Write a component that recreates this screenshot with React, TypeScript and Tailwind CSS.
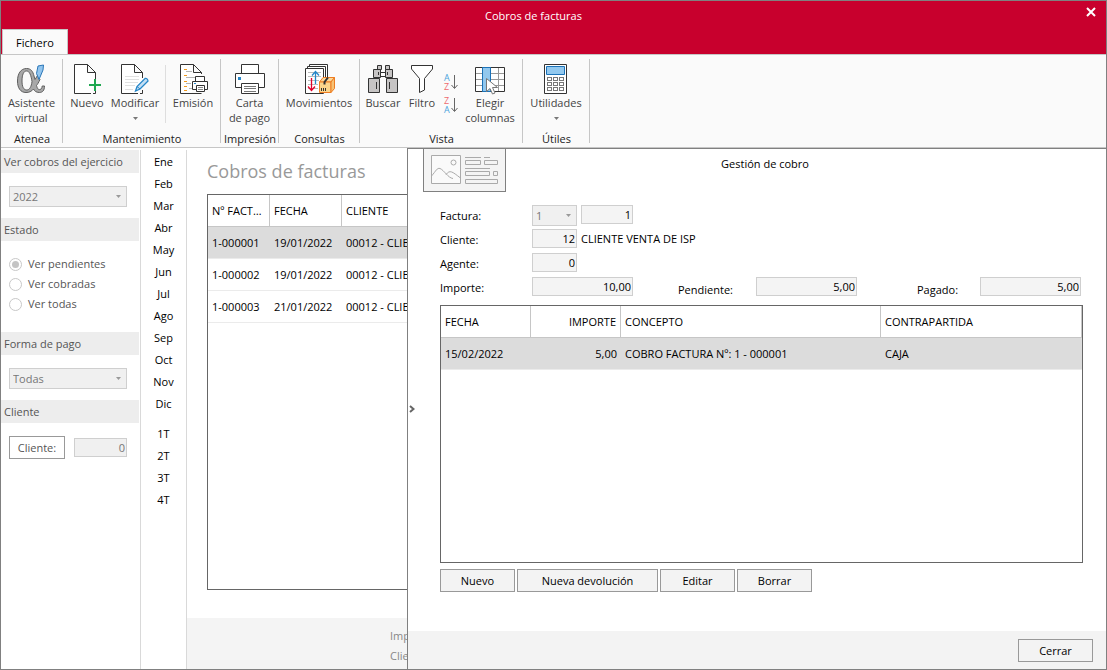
import type { ReactNode } from "react";

const MONTHS = ["Ene", "Feb", "Mar", "Abr", "May", "Jun", "Jul", "Ago", "Sep", "Oct", "Nov", "Dic"];
const QUARTERS = ["1T", "2T", "3T", "4T"];

const INVOICES = [
  { id: "1-000001", date: "19/01/2022", client: "00012 - CLIENTE" },
  { id: "1-000002", date: "19/01/2022", client: "00012 - CLIENTE" },
  { id: "1-000003", date: "21/01/2022", client: "00012 - CLIENTE" },
];

/* ---------- icons ---------- */

function Icon({ children }: { children: ReactNode }) {
  return (
    <svg width="32" height="31" viewBox="0 0 32 31" fill="none" stroke="#333" className="shrink-0" aria-hidden>
      {children}
    </svg>
  );
}

function AlphaIcon() {
  return (
    <Icon>
      <path
        d="M10.500 4.500C15 4.500 17 7.500 18 12L19 15.500L21.500 11.500L24 15.500C22.500 18.500 21.500 20.500 20.500 21.500C21.500 25 22.500 26 24 25.500C25.500 25 26 24 26.200 22H28.500C28.500 26.500 26.500 28.500 23.500 28.500C20 28.500 18.500 27 17.500 25C15.500 27.500 13 28.500 10 28.500C4.500 28.500 1.500 24 1.500 17C1.500 9.500 5 4.500 10.500 4.500Z"
        fill="#a8a8a8"
        stroke="#5f5f5f"
      />
      <path
        d="M10.500 7C13.500 7 15 11 16 17.500C15.500 22.500 13.500 26 10.800 26C7.500 26 6 22.500 6 17C6 11 7.500 7 10.500 7Z"
        fill="#fafafa"
        stroke="#5f5f5f"
      />
      <path d="M22 2L27.500 1L27 6L23 15.500L20.500 9.500Z" fill="#92c5ee" stroke="#2b77b8" />
    </Icon>
  );
}

function NewDocIcon() {
  return (
    <Icon>
      <path d="M20 29.500H3.500V.5H16.500L24.500 8.500V15M24.500 27V29.500H22M16.500 .5V8.500H24.500" fill="#fff" />
      <path d="M24 15V27M18 21H30" stroke="#1fa750" strokeWidth="2" />
    </Icon>
  );
}

function EditDocIcon() {
  return (
    <Icon>
      <path d="M19 29.500H2.500V.5H15.500L23.500 8.500V14M23.500 26V29.500H21M15.500 .5V8.500H23.500" fill="#fff" />
      <path d="M6 12.500H20M6 15.500H20M6 18.500H19M6 21.500H16M6 25.500H14" stroke="#e0e0e0" />
      <path d="M16.500 27L18 22.500L26 14.500Q28.500 14 29 17L21 25Z" fill="#c5dff4" stroke="#2586c8" strokeWidth="1.300" />
      <path d="M18 22.500L21 25" stroke="#2586c8" />
    </Icon>
  );
}

function IssueIcon() {
  return (
    <Icon>
      <path d="M14 29.500H3.500V.5H16.500L24.500 8.500V10M16.500 .5V8.500H24.500M14 29.500H24.500" fill="#fff" />
      <path d="M7 5.500H10M7 11.500H10M7 17.500H10M7 22.500H10M7 26.500H10" stroke="#f39a1e" />
      <path d="M9 7.500H15M9 13.500H18M9 19.500H14M12 24.500H15" stroke="#b5b5b5" />
      <path d="M18.500 17V12.500H27.500V17M15.500 17.500H30.500V25.500H28M19 25.500H15.500V17.500" fill="#fff" />
      <path d="M19.500 21.500H27.500V27.500H19.500Z" fill="#fff" />
      <path d="M21 23.500H26M21 25.500H26" stroke="#888" />
      <path d="M17 19.500H19" stroke="#2586c8" />
    </Icon>
  );
}

function PrinterIcon() {
  return (
    <Icon>
      <path d="M7.500 9.500V.5H24.500V9.500" fill="#fff" />
      <path d="M1.500 9.500H30.500V23.500H1.500Z" fill="#fff" />
      <path d="M7.500 19.500H24.500V29.500H7.500Z" fill="#fff" />
      <path d="M10 22.500H22M10 24.500H22M10 27.500H22" stroke="#777" />
      <path d="M4 13H7V16H4Z" fill="#2586c8" stroke="none" />
    </Icon>
  );
}

function MovesIcon() {
  return (
    <Icon>
      <path d="M6.500 .5H24.500V26H6.500Z" fill="#fff" />
      <path d="M4.500 2.500H22.500V28H4.500Z" fill="#fff" />
      <path d="M2.500 4.500H20.500V29.500H2.500Z" fill="#fff" />
      <path d="M5 8.500H18M5 12.500H18M5 16.500H16M5 20.500H15M5 24.500H15" stroke="#bbb" />
      <path d="M8.500 14V26M5 22.500L8.500 26.500L12 22.500" stroke="#e4002b" strokeWidth="1.300" />
      <path d="M12.500 20V8M9 11.500L12.500 7.500L16 11.500" stroke="#2586c8" strokeWidth="1.300" />
      <path d="M16.500 18L20 13.500H31.500L28 18Z" fill="#fbd89a" stroke="#ed7d22" />
      <path d="M16.500 18H28V28.500H16.500Z" fill="#fbd58c" stroke="#ed7d22" />
      <path d="M28 18L31.500 13.500V24.500L28 28.500Z" fill="#f7c274" stroke="#ed7d22" />
      <path d="M21.500 20.500V18L25 13.500" strokeWidth="2" />
      <path d="M18.500 24V27M20.500 24V27M22.500 24V27" strokeWidth="1" />
    </Icon>
  );
}

function BinocularsIcon() {
  return (
    <Icon>
      <g fill="#c6c4c4">
        <path d="M10.500 1.500H14.500V5.500H10.500ZM18.500 1.500H22.500V5.500H18.500Z" />
        <path d="M13.500 8.500H18.500V12.500H13.500Z" fill="#fff" />
        <path d="M6.500 5.500H13.500V13.500H6.500ZM18.500 5.500H25.500V13.500H18.500Z" />
        <path d="M1.500 14.500H12.500V28.500H1.500ZM19.500 14.500H30.500V28.500H19.500Z" />
      </g>
      <path d="M9.500 18V25M22.500 18V25M11.500 8V11M20.500 8V11" />
    </Icon>
  );
}

function FunnelIcon() {
  return (
    <Icon>
      <path d="M5.500 1.500H26.500V5L18.500 14.500V26L13.500 28.500V14.500L5.500 5Z" fill="#fff" />
    </Icon>
  );
}

function SortIcon({ reverse }: { reverse?: boolean }) {
  return (
    <svg width="18" height="18" viewBox="0 0 18 18" fill="none" className="overflow-visible" aria-hidden>
      <text x="2" y="8" fontSize="9" fill={reverse ? "#ee6a6e" : "#4aa3dc"}>
        {reverse ? "Z" : "A"}
      </text>
      <text x="2" y="17" fontSize="9" fill={reverse ? "#4aa3dc" : "#ee6a6e"}>
        {reverse ? "A" : "Z"}
      </text>
      <path d="M12.500 2V15M9.500 12L12.500 15.500L15.500 12" stroke="#666" />
    </svg>
  );
}

function ColumnsIcon() {
  return (
    <Icon>
      <path d="M1.500 3.500H30.500V27.500H1.500Z" fill="#fff" stroke="none" />
      <path d="M1 9.500H31M1 15.500H31M1 21.500H31M24.500 3V28" stroke="#999" />
      <path d="M1.500 3.500H30.500V27.500H1.500Z" />
      <path d="M8.500 3.500H16.500V27.500H8.500Z" fill="#92c8ee" stroke="#1b72b8" />
      <path d="M12.500 14.500V27.500L16 24.500L18.500 30L21 29L18.500 23.500L23.500 23.500Z" fill="#fff" stroke="#777" />
    </Icon>
  );
}

function CalculatorIcon() {
  return (
    <Icon>
      <path d="M4.500 .5H26.500V29.500H4.500Z" fill="#fff" />
      <path d="M6.500 2.500H24.500V10.500H6.500Z" fill="#92c8ee" stroke="#1b72b8" />
      <g stroke="#777">
        {[13.5, 18.5, 23.5].map((y) =>
          [7.5, 13.5, 19.5].map((x) => <rect key={`${x}-${y}`} x={x} y={y} width="4" height="3" />)
        )}
      </g>
    </Icon>
  );
}

function CardIcon() {
  return (
    <svg width="67" height="30" viewBox="0 0 67 30" fill="none" stroke="#aaa" aria-hidden>
      <path d="M.5 .5H29.500V28.500H.5Z" fill="#fafafa" />
      <circle cx="22.500" cy="7.500" r="2.500" />
      <path d="M.5 21C5 16 6 12.500 9 13.500C13 15 17 23 22 23.500M15 19.500C19 14.500 21 16.500 29.500 23" />
      <path d="M34 2.500H50M53 2.500H59M34 13.500H59" />
      <path d="M34.500 5.500H49.500V9.500H34.500ZM53.500 5.500H66.500V9.500H53.500ZM34.500 16.500H58.500V20.500H34.500ZM62.500 16.500H66.500V20.500H62.500ZM34.500 24.500H66.500V28.500H34.500Z" />
    </svg>
  );
}

function Caret({ className = "" }: { className?: string }) {
  return (
    <svg width="5" height="3" viewBox="0 0 5 3" fill="currentColor" className={className} aria-hidden>
      <path d="M0 0H5L2.500 3Z" />
    </svg>
  );
}

/* ---------- ribbon ---------- */

function RibbonGroup({ label, className = "pr-px", children }: { label: string; className?: string; children: ReactNode }) {
  return (
    <section className="relative flex flex-col after:absolute after:top-1 after:right-0 after:bottom-1 after:w-px after:bg-[#c6c6c6]">
      <div className={`flex h-[76px] ${className}`}>{children}</div>
      <h2 className="h-4 pb-px text-center leading-[15px] text-[#222]">{label}</h2>
    </section>
  );
}

function RibbonButton({
  icon,
  lines,
  menu,
  className,
}: {
  icon: ReactNode;
  lines: string[];
  menu?: boolean;
  className: string;
}) {
  return (
    <button type="button" className={`flex flex-col items-center pt-[9px] leading-[15px] text-[#444] ${className}`}>
      {icon}
      {lines.map((line) => (
        <span key={line} className="whitespace-nowrap">
          {line}
        </span>
      ))}
      {menu && <Caret className="mt-[7px] text-[#777]" />}
    </button>
  );
}

function Ribbon() {
  return (
    <div className="flex border-y border-[#c6c6c6] bg-[#fafafa]">
      <RibbonGroup label="Atenea">
        <RibbonButton icon={<AlphaIcon />} lines={["Asistente", "virtual"]} className="w-[61px]" />
      </RibbonGroup>
      <RibbonGroup label="Mantenimiento" className="px-px">
        <RibbonButton icon={<NewDocIcon />} lines={["Nuevo"]} className="w-[46px]" />
        <RibbonButton icon={<EditDocIcon />} lines={["Modificar"]} menu className="w-[50px]" />
        <span className="mt-[10px] mb-2 ml-[5px] w-px bg-[#dedede]" />
        <RibbonButton icon={<IssueIcon />} lines={["Emisión"]} className="w-[54px]" />
      </RibbonGroup>
      <RibbonGroup label="Impresión">
        <RibbonButton icon={<PrinterIcon />} lines={["Carta", "de pago"]} className="w-[57px]" />
      </RibbonGroup>
      <RibbonGroup label="Consultas">
        <RibbonButton icon={<MovesIcon />} lines={["Movimientos"]} className="w-[80px]" />
      </RibbonGroup>
      <RibbonGroup label="Vista" className="pr-[7px]">
        <RibbonButton icon={<BinocularsIcon />} lines={["Buscar"]} className="w-[46px]" />
        <RibbonButton icon={<FunnelIcon />} lines={["Filtro"]} className="w-[32px]" />
        <div className="flex w-[26px] flex-col items-center gap-[5px] pt-[18px]">
          <button type="button" aria-label="Orden ascendente">
            <SortIcon />
          </button>
          <button type="button" aria-label="Orden descendente">
            <SortIcon reverse />
          </button>
        </div>
        <RibbonButton icon={<ColumnsIcon />} lines={["Elegir", "columnas"]} className="w-[52px]" />
      </RibbonGroup>
      <RibbonGroup label="Útiles">
        <RibbonButton icon={<CalculatorIcon />} lines={["Utilidades"]} menu className="w-[66px]" />
      </RibbonGroup>
    </div>
  );
}

/* ---------- filters ---------- */

function SelectBox({ id, label, value, className }: { id: string; label: string; value: string; className: string }) {
  return (
    <div className={`relative h-[21px] ${className}`}>
      <select
        id={id}
        aria-label={label}
        disabled
        className="h-full w-full appearance-none border border-[#cfcfcf] bg-[#f0f0f0] px-[3px] leading-[19px] text-[#777] opacity-100"
      >
        <option>{value}</option>
      </select>
      <Caret className="pointer-events-none absolute top-[9px] right-[6px] text-[#999]" />
    </div>
  );
}

function FilterTitle({ children }: { children: ReactNode }) {
  return <h2 className="mr-px h-[23px] bg-[#ededed] pl-[3px] leading-[23px]">{children}</h2>;
}

function Filters() {
  return (
    <aside className="w-[139px] shrink-0 pt-[2px] text-[#555]">
      <FilterTitle>Ver cobros del ejercicio</FilterTitle>
      <div className="px-2 pt-[13px] pb-[11px]">
        <SelectBox id="year" label="Ejercicio" value="2022" className="w-[118px]" />
      </div>
      <FilterTitle>Estado</FilterTitle>
      <div className="px-2 pt-[13px] pb-[18px]">
        {["Ver pendientes", "Ver cobradas", "Ver todas"].map((label, i) => (
          <label key={label} className="flex h-5 items-center gap-[6px]">
            <input
              type="radio"
              name="status"
              defaultChecked={i === 0}
              className="h-[13px] w-[13px] appearance-none rounded-full border border-[#c8c8c8] bg-white bg-clip-content p-[2px] checked:bg-[#c4c4c4]"
            />
            {label}
          </label>
        ))}
      </div>
      <FilterTitle>Forma de pago</FilterTitle>
      <div className="px-2 pt-[13px] pb-[11px]">
        <SelectBox id="payment" label="Forma de pago" value="Todas" className="w-[118px]" />
      </div>
      <FilterTitle>Cliente</FilterTitle>
      <div className="flex items-center gap-[9px] px-2 pt-[13px]">
        <button type="button" className="h-[23px] w-[56px] border border-[#999] bg-white pt-px">
          Cliente:
        </button>
        <input
          aria-label="Cliente"
          defaultValue="0"
          className="h-[19px] w-[53px] border border-[#cfcfcf] bg-[#f0f0f0] px-px text-right text-[#777]"
        />
      </div>
    </aside>
  );
}

function Periods() {
  return (
    <nav className="mt-[2px] flex w-[47px] shrink-0 flex-col border-x border-[#d9d9d9] pt-px text-black">
      {MONTHS.map((m) => (
        <button key={m} type="button" className="h-[22px]">
          {m}
        </button>
      ))}
      <div className="mt-2 flex flex-col">
        {QUARTERS.map((q) => (
          <button key={q} type="button" className="h-[22px]">
            {q}
          </button>
        ))}
      </div>
    </nav>
  );
}

function InvoiceList() {
  return (
    <main className="flex w-[220px] shrink-0 flex-col overflow-hidden">
      <h1 className="pt-[11px] pb-[11px] pl-5 text-[18px] leading-6 text-[#999]">Cobros de facturas</h1>
      <div className="mb-7 ml-5 flex-1 border border-r-0 border-[#666]">
        <table className="w-full table-fixed border-separate border-spacing-0 text-left text-black">
          <colgroup>
            <col className="w-[62px]" />
            <col className="w-[72px]" />
            <col />
          </colgroup>
          <thead>
            <tr className="h-8 *:border-b *:border-[#c6c6c6] *:px-1 *:pt-[2px] *:font-normal">
              <th className="truncate border-r">Nº FACTURA</th>
              <th className="border-r">FECHA</th>
              <th>CLIENTE</th>
            </tr>
          </thead>
          <tbody>
            {INVOICES.map((row, i) => (
              <tr
                key={row.id}
                className={`h-8 *:border-b *:border-[#ebebeb] *:pt-[2px] *:pl-1 ${i === 0 ? "bg-[#dcdcdc]" : ""}`}
              >
                <td>{row.id}</td>
                <td>{row.date}</td>
                <td className="overflow-hidden whitespace-nowrap">{row.client}</td>
              </tr>
            ))}
          </tbody>
        </table>
      </div>
      <footer className="h-[51px] bg-[#f4f4f4] pt-2 pl-[203px] leading-5 text-[#888]">
        <p className="overflow-hidden">Importe</p>
        <p className="overflow-hidden">Cliente</p>
      </footer>
    </main>
  );
}

/* ---------- payment panel ---------- */

function ValueInput({ id, label, value, className }: { id: string; label?: string; value: string; className: string }) {
  return (
    <input
      id={id}
      aria-label={label}
      defaultValue={value}
      className={`h-[19px] border border-[#cfcfcf] bg-[#f4f4f4] px-px text-right text-black ${className}`}
    />
  );
}

function PanelButton({ className = "w-[75px]", children }: { className?: string; children: ReactNode }) {
  return (
    <button type="button" className={`h-[23px] border border-[#999] bg-[#f3f3f3] pt-px text-black ${className}`}>
      {children}
    </button>
  );
}

function PaymentPanel() {
  return (
    <section className="flex min-w-0 flex-1 flex-col border-t border-l border-[#808080] bg-white text-black">
      <header className="grid grid-cols-[98px_1fr_82px]">
        <div className="ml-[15px] flex h-[43px] items-center justify-center border border-t-0 border-[#808080] bg-[#f4f4f4]">
          <CardIcon />
        </div>
        <h2 className="pt-[7px] text-center leading-4">Gestión de cobro</h2>
      </header>

      <div className="flex flex-1">
        <button type="button" aria-label="Contraer" className="flex w-8 items-center pb-[5px] pl-px">
          <svg width="6" height="8" viewBox="0 0 6 8" fill="none" stroke="#666" strokeWidth="2" aria-hidden>
            <path d="M1 1L4.500 4L1 7" />
          </svg>
        </button>
        <div className="flex min-w-0 flex-1 flex-col pt-[13px] pr-[23px] pb-[39px]">
          <div className="flex h-6 items-start">
            <label htmlFor="serie" className="w-[92px] leading-[22px]">
              Factura:
            </label>
            <SelectBox id="serie" label="Factura" value="1" className="w-[45px]" />
            <ValueInput id="number" label="Número" value="1" className="ml-1 w-[52px]" />
          </div>
          <div className="flex h-6 items-start">
            <label htmlFor="client" className="w-[92px] leading-[22px]">
              Cliente:
            </label>
            <ValueInput id="client" value="12" className="w-[45px]" />
            <span className="pl-1 leading-[19px]">CLIENTE VENTA DE ISP</span>
          </div>
          <div className="flex h-6 items-start">
            <label htmlFor="agent" className="w-[92px] leading-[22px]">
              Agente:
            </label>
            <ValueInput id="agent" value="0" className="w-[45px]" />
          </div>
          <div className="flex h-7 items-start pr-[2px]">
            <label htmlFor="amount" className="w-[92px] leading-[22px]">
              Importe:
            </label>
            <ValueInput id="amount" value="10,00" className="w-[101px]" />
            <div className="flex flex-1 justify-end">
              <label htmlFor="pending" className="w-[78px] pt-[5px]">
                Pendiente:
              </label>
              <ValueInput id="pending" value="5,00" className="w-[101px]" />
            </div>
            <div className="flex flex-1 justify-end">
              <label htmlFor="paid" className="w-[63px] pt-[5px]">
                Pagado:
              </label>
              <ValueInput id="paid" value="5,00" className="w-[101px]" />
            </div>
          </div>

          <div className="flex-1 border border-[#666]">
            <table className="w-full table-fixed border-separate border-spacing-0 text-left">
              <colgroup>
                <col className="w-[90px]" />
                <col className="w-[90px]" />
                <col className="w-[260px]" />
                <col />
              </colgroup>
              <thead>
                <tr className="h-8 *:border-r *:border-b *:border-[#c6c6c6] *:px-1 *:pt-[2px] *:font-normal">
                  <th>FECHA</th>
                  <th className="text-right">IMPORTE</th>
                  <th>CONCEPTO</th>
                  <th>CONTRAPARTIDA</th>
                </tr>
              </thead>
              <tbody>
                <tr className="h-8 bg-[#dcdcdc] *:border-b *:border-[#ebebeb] *:px-1 *:pt-[2px]">
                  <td>15/02/2022</td>
                  <td className="text-right">5,00</td>
                  <td>COBRO FACTURA Nº: 1 - 000001</td>
                  <td>CAJA</td>
                </tr>
              </tbody>
            </table>
          </div>

          <div className="mt-[6px] flex gap-[2px]">
            <PanelButton>Nuevo</PanelButton>
            <PanelButton className="w-[141px]">Nueva devolución</PanelButton>
            <PanelButton>Editar</PanelButton>
            <PanelButton>Borrar</PanelButton>
          </div>
        </div>
      </div>

      <footer className="flex h-[38px] justify-end bg-[#f3f3f3] pt-2 pr-[13px]">
        <PanelButton>Cerrar</PanelButton>
      </footer>
    </section>
  );
}

export default function App() {
  return (
    <div className="flex min-h-screen flex-col border border-[#808080] bg-white font-['Open_Sans',sans-serif] text-[11px]">
      <header className="flex h-[53px] flex-col bg-[#c8002d] text-white">
        <div className="flex h-[29px] items-start">
          <span className="flex-1 pt-[7px] text-center leading-4">Cobros de facturas</span>
          <button type="button" aria-label="Cerrar ventana" className="flex h-[22px] w-10 items-center justify-end pr-[10px]">
            <svg width="10" height="10" viewBox="0 0 10 10" stroke="currentColor" strokeWidth="2" aria-hidden>
              <path d="M1 1L9 9M9 1L1 9" />
            </svg>
          </button>
        </div>
        <button
          type="button"
          className="relative z-10 ml-px h-[25px] w-[66px] shrink-0 border border-b-0 border-[#c6c6c6] bg-[#fafafa] pt-[3px] text-black"
        >
          Fichero
        </button>
      </header>
      <Ribbon />
      <div className="flex flex-1">
        <Filters />
        <Periods />
        <InvoiceList />
        <PaymentPanel />
      </div>
    </div>
  );
}
